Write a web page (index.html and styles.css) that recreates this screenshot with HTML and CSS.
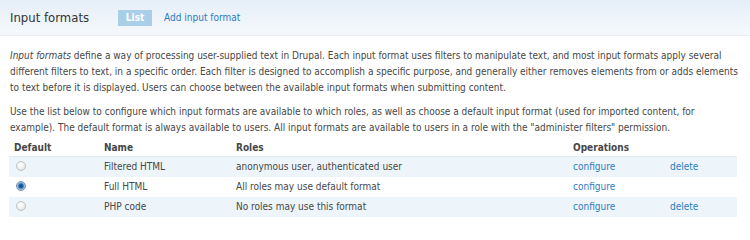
FILE: index.html
```html
<!DOCTYPE html>
<html>
<head>
<meta charset="utf-8">
<link rel="stylesheet" href="styles.css">
</head>
<body>
<div class="header">
  <h2 class="title">Input formats</h2>
  <ul class="tabs">
    <li class="tab active">List</li>
    <li class="tab"><a href="#">Add input format</a></li>
  </ul>
</div>
<div class="content">
  <p><em>Input formats</em> define a way of processing user-supplied text in Drupal. Each input format uses filters to manipulate text, and most input formats apply several different filters to text, in a specific order. Each filter is designed to accomplish a specific purpose, and generally either removes elements from or adds elements to text before it is displayed. Users can choose between the available input formats when submitting content.</p>
  <p class="last">Use the list below to configure which input formats are available to which roles, as well as choose a default input format (used for imported content, for example). The default format is always available to users. All input formats are available to users in a role with the "administer filters" permission.</p>
  <table class="formats">
    <colgroup>
      <col class="w-default"><col class="w-name"><col class="w-roles"><col class="w-conf"><col class="w-del">
    </colgroup>
    <thead>
      <tr><th class="first">Default</th><th>Name</th><th>Roles</th><th colspan="2">Operations</th></tr>
    </thead>
    <tbody>
      <tr class="odd"><td class="first"><span class="radio"></span></td><td>Filtered HTML</td><td>anonymous user, authenticated user</td><td><a href="#">configure</a></td><td><a href="#">delete</a></td></tr>
      <tr class="even"><td class="first"><span class="radio checked"></span></td><td>Full HTML</td><td>All roles may use default format</td><td><a href="#">configure</a></td><td></td></tr>
      <tr class="odd"><td class="first"><span class="radio"></span></td><td>PHP code</td><td>No roles may use this format</td><td><a href="#">configure</a></td><td><a href="#">delete</a></td></tr>
    </tbody>
  </table>
</div>
</body>
</html>
```
FILE: styles.css
```css
html, body {
  margin: 0;
  padding: 0;
  background: #fff;
}
body {
  font-family: "DejaVu Sans Condensed", "DejaVu Sans", Verdana, sans-serif;
  font-size: 10px;
  color: #474747;
  width: 750px;
  height: 226px;
  overflow: hidden;
}
a {
  color: #2e7cbd;
  text-decoration: none;
}
.header {
  display: flex;
  align-items: center;
  height: 35px;
  padding: 0 10px;
  background: linear-gradient(to bottom, #e5eef8 0%, #f6f9fc 100%);
  border-bottom: 1px solid #e7eef4;
}
.title {
  margin: 0;
  font-size: 13px;
  font-weight: normal;
  color: #333;
  line-height: 16px;
}
.tabs {
  display: flex;
  align-items: center;
  list-style: none;
  margin: 0 0 0 29px;
  padding: 0;
  gap: 12px;
}
.tab {
  line-height: 16px;
}
.tab.active {
  background: #a9cee8;
  color: #fff;
  font-weight: bold;
  width: 34px;
  text-align: center;
}
.content {
  padding: 0 10px;
}
p {
  width: 729px;
  margin: 12px 0 8px;
  line-height: 16px;
}
p.last {
  margin: 8px 0 3px;
}
.formats {
  width: 728px;
  margin-left: -1px;
  border-collapse: collapse;
  table-layout: fixed;
}
.w-default { width: 91px; }
.w-name { width: 132px; }
.w-roles { width: 337px; }
.w-conf { width: 97px; }
.w-del { width: 71px; }
.formats th {
  text-align: left;
  font-weight: bold;
  color: #474747;
  padding: 0 4px;
  height: 17px;
  line-height: 14px;
  border-bottom: 1px solid #e3edf5;
}
.formats td {
  padding: 0 4px;
  height: 20px;
  line-height: 14px;
}
.formats th.first {
  padding-left: 5px;
}
.formats td.first {
  padding-left: 7px;
}
.formats tr.odd td {
  background: #edf5fa;
}
.radio {
  display: inline-block;
  box-sizing: border-box;
  width: 10px;
  height: 10px;
  border-radius: 50%;
  border: 1px solid #c2c2c2;
  background: radial-gradient(circle at 40% 35%, #fff 0%, #eeeeee 55%, #dadada 100%);
  vertical-align: middle;
  position: relative;
  top: -1px;
}
.radio.checked {
  border-color: #7b96b0;
  background: radial-gradient(circle at 50% 50%, #0b4680 0%, #2266a3 35%, #8fb8de 60%, #e6eff8 100%);
}
```
